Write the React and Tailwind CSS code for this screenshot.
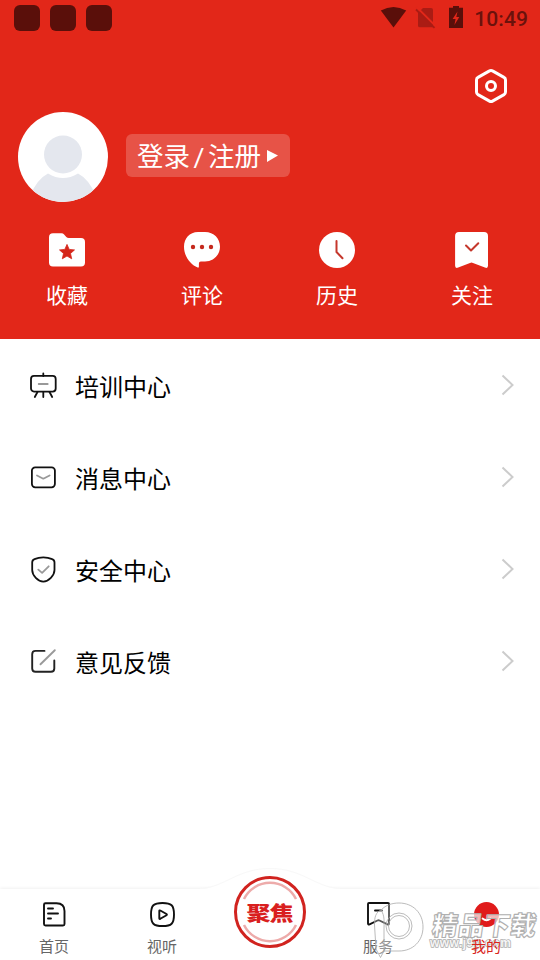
const shortcuts = [
  { label: "收藏", Icon: FolderIcon },
  { label: "评论", Icon: CommentIcon },
  { label: "历史", Icon: HistoryIcon },
  { label: "关注", Icon: FollowIcon },
]

const menu = [
  { label: "培训中心", Icon: TrainingIcon },
  { label: "消息中心", Icon: MessageIcon },
  { label: "安全中心", Icon: ShieldIcon },
  { label: "意见反馈", Icon: FeedbackIcon },
]

function FolderIcon() {
  return (
    <svg width="36" height="36" viewBox="0 0 36 36">
      <path d="M4 1.2h8.5q1.6 0 2.6 1.2l2.2 2.5q1 1.1 2.500 1.1H32q4 0 4 4v20.600q0 4-4 4H4q-4 0-4-4V5.200q0-4 4-4z" fill="#fff" />
      <path d="M18 12.400l2.200 5 5.300.5-4 3.600 1.200 5.300-4.700-2.800-4.700 2.800 1.200-5.300-4-3.600 5.300-.5z" fill="#d5261a" stroke="#d5261a" strokeWidth=".8" strokeLinejoin="round" />
    </svg>
  )
}

function CommentIcon() {
  return (
    <svg width="36" height="36" viewBox="0 0 36 36">
      <path d="M14 0h7c9 0 15 6.500 15 14.700S29.500 29.500 21 29.500h-4.200q-1.900 0-1.900 1.900v3.200q0 1.400-1.200 1C6.500 32.500 0 24.500 0 14.800 0 6.500 5.500 0 14 0z" fill="#fff" />
      <circle cx="9" cy="15" r="2.2" fill="#c5281c" />
      <circle cx="18" cy="15" r="2.2" fill="#c5281c" />
      <circle cx="27" cy="15" r="2.2" fill="#c5281c" />
    </svg>
  )
}

function HistoryIcon() {
  return (
    <svg width="36" height="36" viewBox="0 0 36 36">
      <circle cx="18" cy="18" r="18" fill="#fff" />
      <path d="M17.500 9v11l6 6.200" fill="none" stroke="#c5372c" strokeWidth="2" strokeLinecap="round" strokeLinejoin="round" />
    </svg>
  )
}

function FollowIcon() {
  return (
    <svg width="36" height="36" viewBox="0 0 36 36">
      <path d="M5 0h25q4 0 4 4v29.500q0 3.400-3.100 2L19 30.900q-1.500-.7-3 0L4.200 35.500q-3.100 1.400-3.100-2V4Q1.100 0 5 0z" fill="#fff" />
      <path d="M12 13.500l5 5 7.300-7.300" fill="none" stroke="#c5372c" strokeWidth="2" strokeLinecap="round" strokeLinejoin="round" />
    </svg>
  )
}

function TrainingIcon() {
  return (
    <svg width="28" height="28" viewBox="0 0 28 28" fill="none" stroke="#111" strokeWidth="1.800" strokeLinecap="round">
      <rect x="2" y="4.900" width="24.700" height="15.700" rx="3" />
      <path d="M14.300 2.500v2.500M14.300 21v5M8.500 21l-2.700 5M20.500 21l2.700 5" />
      <path d="M9.700 13h9" stroke="#999" />
    </svg>
  )
}

function MessageIcon() {
  return (
    <svg width="28" height="28" viewBox="0 0 28 28" fill="none" stroke="#111" strokeWidth="1.800" strokeLinecap="round" strokeLinejoin="round">
      <rect x="2.900" y="4.300" width="23" height="20" rx="3.300" />
      <path d="M8 12.500l6.300 3.200 6.300-3.200" stroke="#999" />
    </svg>
  )
}

function ShieldIcon() {
  return (
    <svg width="28" height="28" viewBox="0 0 28 28" fill="none" stroke="#111" strokeWidth="1.800" strokeLinecap="round" strokeLinejoin="round">
      <path d="M14.300 2.300C17.500 2.300 20.700 3 23.200 4.100Q25.500 5 25.500 7.500V15C25.500 20.500 19.500 26.600 14.300 26.600S3.200 20.500 3.200 15V7.500Q3.200 5 5.500 4.100C7.900 3 11 2.300 14.300 2.300z" />
      <path d="M9.300 14.600l3.800 3.300 6.600-6.600" stroke="#999" />
    </svg>
  )
}

function FeedbackIcon() {
  return (
    <svg width="28" height="28" viewBox="0 0 28 28" fill="none" stroke="#222" strokeWidth="1.900" strokeLinecap="round">
      <path d="M15.500 3.900H6.500Q3.200 3.900 3.200 7.200V21.500Q3.200 24.800 6.500 24.800H22Q25.300 24.800 25.300 21.500V13.500" />
      <path d="M11.500 17.300L25.800 3.200" stroke="#999" />
    </svg>
  )
}

function StatusBar() {
  return (
    <div className="flex h-9 items-center justify-between pl-[14px] pr-3">
      <div className="flex gap-[10px]">
        <div className="h-[26px] w-[26px] rounded-md bg-[#5a0f0a]" />
        <div className="h-[26px] w-[26px] rounded-md bg-[#5a0f0a]" />
        <div className="h-[26px] w-[26px] rounded-md bg-[#5a0f0a]" />
      </div>
      <div className="flex items-center">
        <svg width="90" height="28" viewBox="0 0 90 28" className="mr-[4px]">
          <path d="M.8 6.500Q13.500-.5 26.200 6.500L13.500 23.500z" fill="#5a0f0a" />
          <path d="M43 4h8q2 0 2 2v17.300H40q-2 0-2-1.500V9z" fill="#aa1c14" />
          <path d="M36.500 3L56 22.500" stroke="#e22719" strokeWidth="2" />
          <path d="M36 5.500L54.500 23.800" stroke="#aa1c14" strokeWidth="1.800" />
          <path d="M69 3.800h4V2h6v1.800H83V24H69z" fill="#5a0f0a" />
          <path d="M77.500 7.500L72.600 15h3l-1.200 6 4.900-8h-3z" fill="#e22719" />
        </svg>
        <span className="mt-0.5 text-[21px] font-medium leading-none tracking-[0.1px] text-[#6b120c]">10:49</span>
      </div>
    </div>
  )
}

function NavItem({ label, children, active }) {
  return (
    <div className="flex h-full flex-1 flex-col items-center pt-[8px]">
      <div className="h-8">{children}</div>
      <span className={active ? "relative z-10 mt-[7px] text-[15px] leading-[22px] text-[#d9251b]" : "mt-[7px] text-[15px] leading-[22px] text-[#666]"}>
        {label}
      </span>
    </div>
  )
}

function Watermark() {
  return (
    <svg className="pointer-events-none absolute bottom-0 right-0" width="170" height="70" viewBox="370 890 170 70">
      <g fill="none" stroke="#aaa" strokeOpacity=".8">
        <path d="M381 910C386 905 392 903 399 903C413 903 423 913 423 927S413 951 399 951H384L380.500 957.500L376 949L374.500 925C374.300 917 376 912 381 910z" fill="#fff" fillOpacity=".3" />
        <path d="M381 910C385 916 384 922 384 930V951" />
        <circle cx="399" cy="926" r="13" />
        <circle cx="399" cy="926" r="10.500" />
      </g>
      <g transform="translate(431 934.500) skewX(-8)" fontSize="26" fontWeight="900" fontFamily="Noto Sans CJK SC, sans-serif" strokeLinejoin="round">
        <text x="0" y="0" fill="#fff" fillOpacity=".7" stroke="#b0b0b0" strokeWidth="1.100" textLength="104">精品下载</text>
      </g>
      <text x="430" y="947" fontSize="12" fontWeight="700" fontFamily="Liberation Sans, sans-serif" fill="#fff" fillOpacity=".9" stroke="#b0b0b0" strokeWidth="1.500" paintOrder="stroke" textLength="81">www.j9p.com</text>
    </svg>
  )
}

export default function App() {
  return (
    <div className="relative flex h-[960px] w-[540px] flex-col overflow-hidden bg-white font-['Roboto','Noto_Sans_CJK_SC',sans-serif]">
      <header className="h-[339px] shrink-0 bg-[#e22719] text-white">
        <StatusBar />
        <div className="flex h-[76px] justify-end pr-[31px] pt-8">
          <svg width="36" height="36" viewBox="0 0 36 36" fill="none" stroke="#fff" strokeWidth="3" strokeLinejoin="round">
            <path d="M16.500 2.900Q18 2 19.500 2.900L31 9.400Q32.500 10.200 32.500 12V24Q32.500 25.700 31 26.600L19.500 33.100Q18 34 16.500 33.100L5 26.600Q3.500 25.700 3.500 24V12Q3.500 10.200 5 9.400z" />
            <circle cx="18" cy="18" r="4.500" />
          </svg>
        </div>
        <div className="flex h-[90px] items-center pl-[18px]">
          <svg width="90" height="90" viewBox="0 0 90 90">
            <clipPath id="avatar"><circle cx="45" cy="45" r="45" /></clipPath>
            <g clipPath="url(#avatar)">
              <path d="M0 0h90v90H0z" fill="#fff" />
              <circle cx="45" cy="42.500" r="19" fill="#e4e7ee" />
              <path d="M12 84Q19 67 30 61.500Q45 70.500 60 61.500Q71 67 78 84V90H12z" fill="#e4e7ee" />
            </g>
          </svg>
          <button className="ml-[18px] mt-[-3px] flex h-[43px] w-[164px] items-center rounded-md bg-[#e75347] pl-[11px] text-[26.5px] leading-none">
            <span className="mt-[4px]">登录</span>
            <span className="mx-[3.5px] mt-[3px]">/</span>
            <span className="mt-[4px]">注册</span>
            <svg width="11" height="12" viewBox="0 0 11 12" className="ml-[6px]">
              <path d="M0 0L11 5.500L0 12z" fill="#fff" />
            </svg>
          </button>
        </div>
        <div className="-ml-px flex pt-[30px]">
          {shortcuts.map(({ label, Icon }) => (
            <div key={label} className="flex w-[135px] flex-col items-center">
              <Icon />
              <span className="ml-px mt-[13px] text-[21px] leading-[31px]">{label}</span>
            </div>
          ))}
        </div>
      </header>

      <main className="flex-1">
        {menu.map(({ label, Icon }) => (
          <div key={label} className="flex h-[92px] items-center pl-[29px] pr-[26px]">
            <Icon />
            <span className="ml-[18px] flex-1 pt-[5px] text-[24px] text-black">{label}</span>
            <svg width="13" height="22" viewBox="0 0 13 22" fill="none" stroke="#ccc" strokeWidth="2">
              <path d="M1.500 1.500L11.500 11L1.500 20.500" />
            </svg>
          </div>
        ))}
      </main>

      <nav className="relative flex h-[71px] shrink-0 bg-white shadow-[0_-1px_3px_rgba(0,0,0,0.06)]">
        <NavItem label="首页">
          <svg width="32" height="32" viewBox="0 0 32 32" fill="none" stroke="#111" strokeWidth="1.900" strokeLinecap="round" strokeLinejoin="round">
            <path d="M7.500 6.200H18.500Q26.500 6.200 26.500 14V27Q26.500 28.500 25 28.500H7.500Q6 28.500 6 27V7.700Q6 6.200 7.500 6.200z" />
            <path d="M10 11.500h5M10 16.500h10M10 21.500h3" />
          </svg>
        </NavItem>
        <NavItem label="视听">
          <svg width="32" height="32" viewBox="0 0 32 32" fill="none" stroke="#111" strokeWidth="1.900" strokeLinejoin="round">
            <path d="M16.500 6C25.500 6 28 8.300 28 17.500S25.500 29 16.500 29S5 26.700 5 17.500S7.500 6 16.500 6z" />
            <path d="M13.300 14Q13.300 13 14.300 13.500L20.500 17Q21.300 17.600 20.500 18.200L14.300 21.800Q13.300 22.300 13.300 21.300z" />
          </svg>
        </NavItem>
        <div className="relative flex-1">
          <svg className="absolute -top-[27px] left-1/2 -translate-x-1/2" width="140" height="98" viewBox="200 862 140 98">
            <path d="M200 889C225 888 237 869 270 869S315 888 340 889V960H200z" fill="#fff" />
            <path d="M200 888.500C225 887.500 237 868.500 270 868.500S315 887.500 340 888.500" fill="none" stroke="#f8f8f8" />
            <circle cx="270" cy="912" r="34.500" fill="#fff" stroke="#d1231f" strokeWidth="3" />
            <path d="M244 899A29 29 0 0 1 296 899M244 925A29 29 0 0 0 296 925" fill="none" stroke="#edabaa" strokeWidth="2.500" />
            <g transform="translate(246.500 921) scale(1 .86)">
              <text x="0" y="0" fontSize="24" fontWeight="900" textLength="47" fontFamily="Noto Sans CJK SC, sans-serif" fill="#d91f1f">聚焦</text>
            </g>
          </svg>
        </div>
        <NavItem label="服务">
          <svg width="32" height="32" viewBox="0 0 32 32" fill="none" stroke="#111" strokeWidth="1.900" strokeLinecap="round" strokeLinejoin="round">
            <path d="M7 6H26Q27 6 27 7V26.500Q27 28 25.500 27.300L17.500 23.500Q16.500 23 15.500 23.500L7.500 27.300Q6 28 6 26.500V7Q6 6 7 6z" />
            <path d="M13 13.500h7" />
          </svg>
        </NavItem>
        <NavItem label="我的" active>
          <svg width="32" height="32" viewBox="0 0 32 32">
            <circle cx="16.500" cy="17.500" r="12.500" fill="#e01b1b" />
            <path d="M12.500 21.500Q16.500 25 20.500 21.500" fill="none" stroke="#fff" strokeWidth="1.800" strokeLinecap="round" />
          </svg>
        </NavItem>
      </nav>
      <Watermark />
    </div>
  )
}
